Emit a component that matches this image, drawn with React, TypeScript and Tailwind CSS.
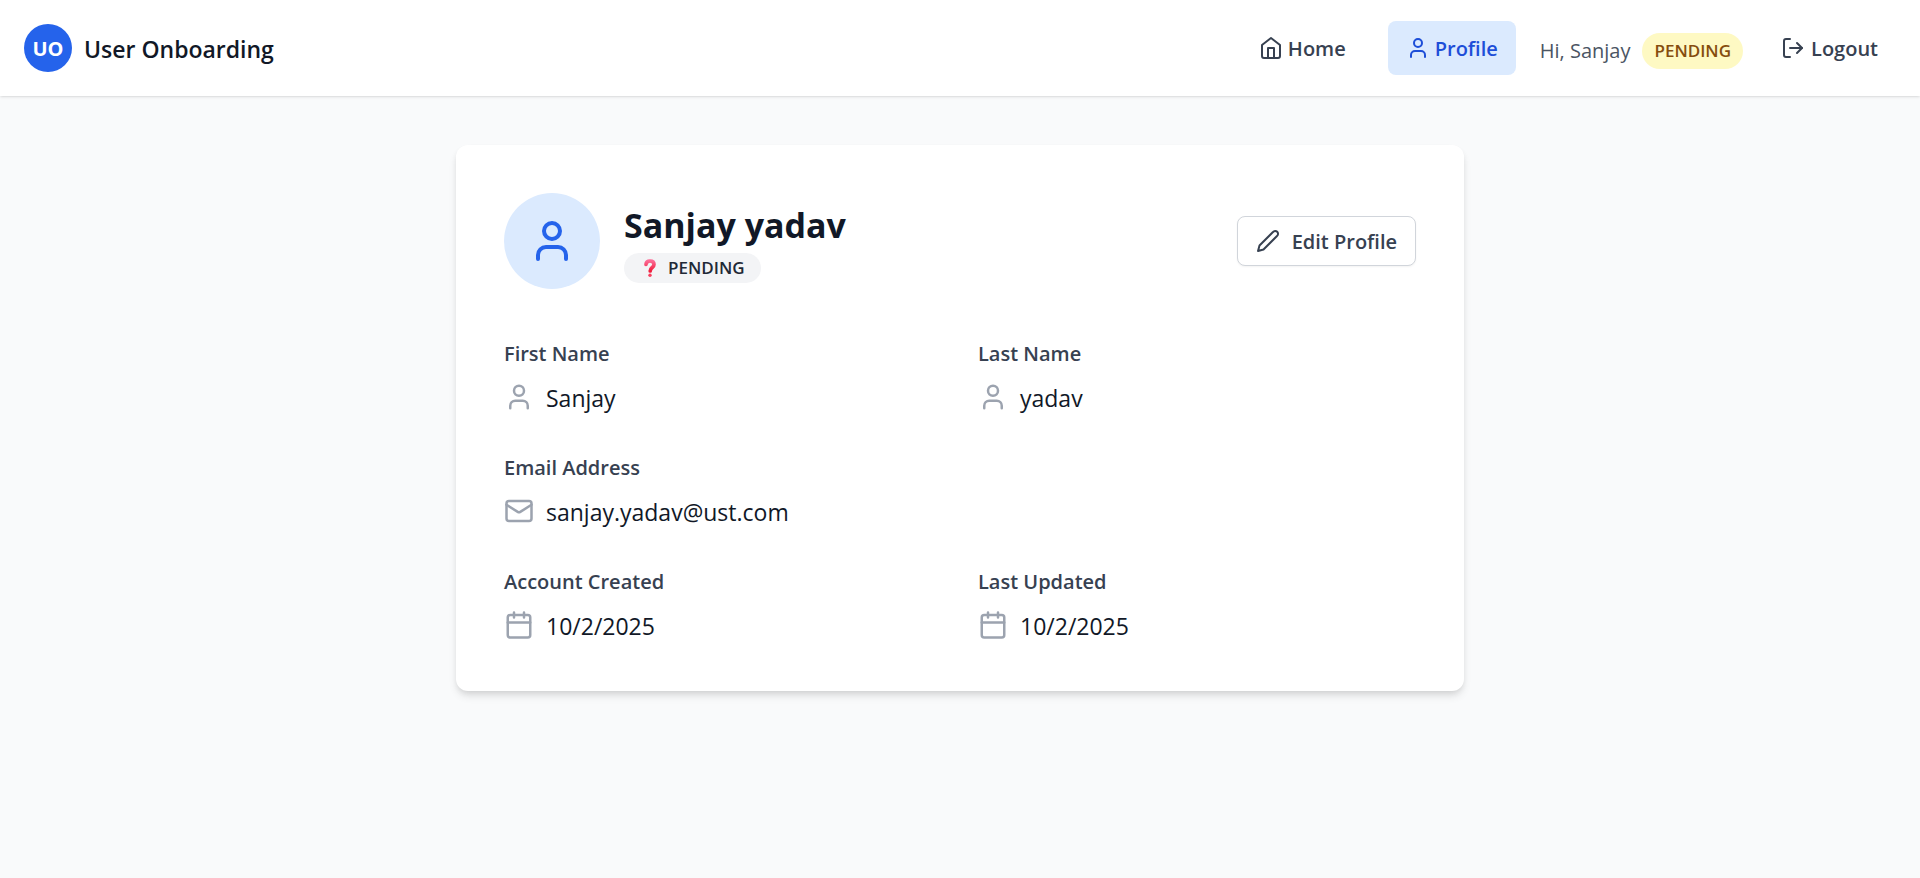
import type { ReactNode } from "react";

type IconProps = { className?: string; children?: ReactNode };

function Icon({ className, children }: IconProps) {
  return (
    <svg
      viewBox="0 0 24 24"
      fill="none"
      stroke="currentColor"
      strokeWidth="2"
      strokeLinecap="round"
      strokeLinejoin="round"
      className={className}
      aria-hidden="true"
    >
      {children}
    </svg>
  );
}

const HomeIcon = ({ className }: IconProps) => (
  <Icon className={className}>
    <path d="m3 9 9-7 9 7v11a2 2 0 0 1-2 2H5a2 2 0 0 1-2-2z" />
    <polyline points="9 22 9 12 15 12 15 22" />
  </Icon>
);

const UserIcon = ({ className }: IconProps) => (
  <Icon className={className}>
    <path d="M19 21v-2a4 4 0 0 0-4-4H9a4 4 0 0 0-4 4v2" />
    <circle cx="12" cy="7" r="4" />
  </Icon>
);

const LogoutIcon = ({ className }: IconProps) => (
  <Icon className={className}>
    <path d="M9 21H5a2 2 0 0 1-2-2V5a2 2 0 0 1 2-2h4" />
    <polyline points="16 17 21 12 16 7" />
    <line x1="21" x2="9" y1="12" y2="12" />
  </Icon>
);

const PencilIcon = ({ className }: IconProps) => (
  <Icon className={className}>
    <path d="M17 3a2.85 2.83 0 1 1 4 4L7.5 20.5 2 22l1.5-5.5Z" />
  </Icon>
);

const MailIcon = ({ className }: IconProps) => (
  <Icon className={className}>
    <rect width="20" height="16" x="2" y="4" rx="2" />
    <path d="m22 7-8.97 5.7a1.94 1.94 0 0 1-2.06 0L2 7" />
  </Icon>
);

const CalendarIcon = ({ className }: IconProps) => (
  <Icon className={className}>
    <path d="M8 2v4M16 2v4M3 10h18" />
    <rect width="18" height="18" x="3" y="4" rx="2" />
  </Icon>
);

const QuestionMark = () => (
  <svg viewBox="0 0 12 18" className="h-[18px] w-3" role="img" aria-label="Unknown status">
    <defs>
      <linearGradient id="mark" x1="0" y1="0" x2="0" y2="1">
        <stop offset="0" stopColor="#fb6a94" />
        <stop offset="1" stopColor="#f01e3c" />
      </linearGradient>
    </defs>
    <path
      d="M2 5.4C2.200 3 4 2 6 2c2.400 0 4 1.300 4 3.400C10 8.600 6.200 8.400 6.200 12"
      fill="none"
      stroke="url(#mark)"
      strokeWidth="3.700"
      strokeLinecap="round"
    />
    <circle cx="6" cy="16.200" r="1.700" fill="#f7405f" />
  </svg>
);

type FieldProps = { label: string; value: string; icon: ReactNode; wide?: boolean };

function Field({ label, value, icon, wide }: FieldProps) {
  return (
    <div className={wide ? "md:col-span-2" : ""}>
      <dt className="mb-2 text-[20px] leading-[34px] font-semibold text-[#374151]">{label}</dt>
      <dd className="flex items-center gap-3 text-[#111827]">
        <span className="text-[#9ca3af]">{icon}</span>
        <span className="pt-0.5 text-[23px] leading-[34px]">{value}</span>
      </dd>
    </div>
  );
}

export default function App() {
  return (
    <div className="min-h-screen bg-[#f9fafb] font-['Open_Sans','Noto_Sans',sans-serif]">
      <header className="bg-white shadow-sm">
        <div className="flex h-24 items-center justify-between px-6">
          <a href="#" className="flex items-center gap-3">
            <span className="flex size-12 items-center justify-center rounded-full bg-[#2563eb] pt-0.5 text-[20px] font-bold text-white">
              UO
            </span>
            <span className="pt-0.5 text-[23px] font-semibold text-[#111827]">User Onboarding</span>
          </a>
          <nav className="flex items-center gap-6 text-[20px] leading-[28px]">
            <a href="#" className="flex items-center gap-[5px] rounded-lg px-[18px] py-3 font-semibold text-[#374151]">
              <HomeIcon className="size-6" />
              <span className="pt-0.5">Home</span>
            </a>
            <a href="#" className="flex items-center gap-[5px] rounded-lg bg-[#dbeafe] px-[18px] py-3 font-semibold text-[#1d4ed8]">
              <UserIcon className="size-6" />
              <span className="pt-0.5">Profile</span>
            </a>
            <div className="flex items-center gap-3 pt-1.5 text-[#4b5563]">
              <span>Hi, Sanjay</span>
              <span className="rounded-full bg-[#fef9c3] px-3 py-1.5 text-[17px] leading-6 font-semibold text-[#854d0e]">
                PENDING
              </span>
            </div>
            <button type="button" className="flex items-center gap-1.5 py-3 pr-[18px] pl-3.5 font-semibold text-[#374151]">
              <LogoutIcon className="size-6" />
              <span className="pt-0.5">Logout</span>
            </button>
          </nav>
        </div>
      </header>

      <main className="mx-auto max-w-[1008px] pt-[49px] pb-12">
        <section className="rounded-xl bg-white p-12 shadow-[0_6px_9px_-1px_rgba(0,0,0,0.1),0_3px_6px_-2px_rgba(0,0,0,0.1)]">
          <div className="mb-12 flex items-center justify-between">
            <div className="flex items-center gap-6">
              <div className="flex size-24 items-center justify-center rounded-full bg-[#dbeafe] text-[#2563eb]">
                <UserIcon className="size-12" />
              </div>
              <div className="flex flex-col items-start gap-0.5">
                <h1 className="text-[34px] leading-[52px] font-bold text-[#111827]">Sanjay yadav</h1>
                <span className="flex items-center gap-3 rounded-full bg-[#f3f4f6] py-[3px] pr-4 pl-5 text-[17px] leading-6 font-semibold text-[#1f2937]">
                  <QuestionMark />
                  PENDING
                </span>
              </div>
            </div>
            <button
              type="button"
              className="flex items-center gap-3 rounded-lg border border-[#d1d5db] bg-white px-[18px] py-[9px] text-[20px] font-semibold text-[#374151] shadow-xs"
            >
              <PencilIcon className="size-6" />
              <span className="pt-0.5 leading-[28px]">Edit Profile</span>
            </button>
          </div>

          <dl className="grid grid-cols-1 gap-9 md:grid-cols-2">
            <Field label="First Name" value="Sanjay" icon={<UserIcon className="size-[30px]" />} />
            <Field label="Last Name" value="yadav" icon={<UserIcon className="size-[30px]" />} />
            <Field wide label="Email Address" value="sanjay.yadav@ust.com" icon={<MailIcon className="size-[30px]" />} />
            <Field label="Account Created" value="10/2/2025" icon={<CalendarIcon className="size-[30px]" />} />
            <Field label="Last Updated" value="10/2/2025" icon={<CalendarIcon className="size-[30px]" />} />
          </dl>
        </section>
      </main>
    </div>
  );
}
